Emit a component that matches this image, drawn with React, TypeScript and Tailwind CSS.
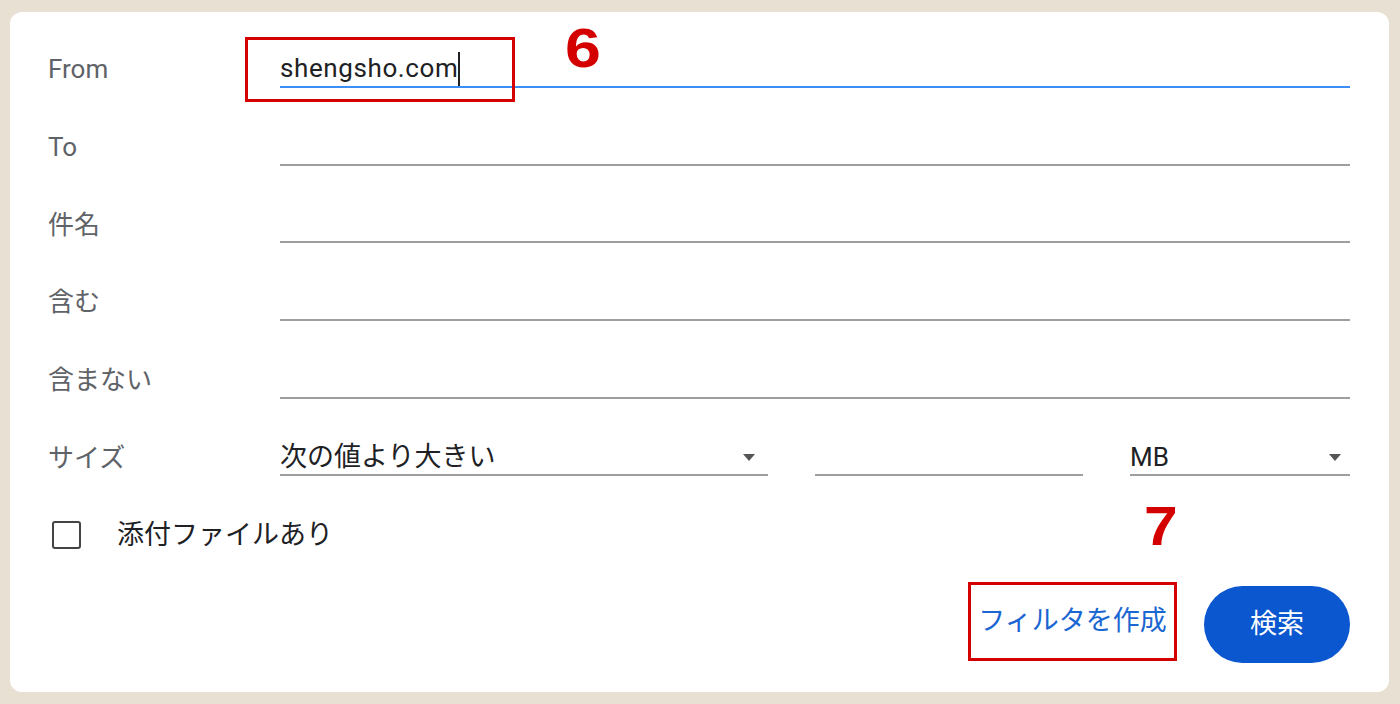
import React from 'react';

const font = { fontFamily: 'Roboto, "Noto Sans CJK JP", sans-serif' };
const mark = { fontFamily: '"Liberation Sans", sans-serif' };

const rows = ['From', 'To', '件名', '含む', '含まない'];

function Arrow() {
  return (
    <svg width="12" height="7" viewBox="0 0 12 7" className="shrink-0">
      <path d="M0 0h12L6 7z" fill="#555" />
    </svg>
  );
}

function Label({ children }: { children: React.ReactNode }) {
  return <div className="w-[232px] shrink-0 text-[26px] text-[#5f6368]">{children}</div>;
}

export default function App() {
  return (
    <div className="h-[704px] w-[1400px] bg-[#e9e0d4] pt-[12px] pl-[10px] pr-[11px] pb-[12px]" style={font}>
      <div className="relative h-full rounded-[12px] bg-white pt-[19px] pl-[38px] pr-[39px]">
        {rows.map((label, i) => (
          <div key={label} className="flex h-[77.7px] items-center">
            <Label>{label}</Label>
            {i === 0 ? (
              <div className="flex h-[36px] flex-1 items-center border-b-2 border-[#3a8ef5] text-[26px] tracking-[0.6px] text-[#202124]">
                shengsho.com
                <span className="inline-block h-[34px] w-[2px] bg-[#202124]" />
              </div>
            ) : (
              <div className="h-[36px] flex-1 border-b-2 border-[#9e9e9e]" />
            )}
          </div>
        ))}

        <div className="flex h-[77.7px] items-center">
          <Label>サイズ</Label>
          <div className="flex h-[36px] w-[488px] items-center justify-between border-b-2 border-[#9e9e9e] pr-[13px] text-[27px] text-[#202124]">
            次の値より大きい
            <Arrow />
          </div>
          <div className="ml-[47px] h-[36px] w-[268px] border-b-2 border-[#9e9e9e]" />
          <div className="ml-[47px] flex h-[36px] flex-1 items-center justify-between border-b-2 border-[#9e9e9e] pr-[9px] text-[26px] text-[#202124]">
            MB
            <Arrow />
          </div>
        </div>

        <div className="flex h-[76px] items-center">
          <div className="ml-[4px] h-[28px] w-[29px] rounded-[3px] border-[2.5px] border-[#444]" />
          <span className="ml-[36px] text-[27px] text-[#202124]">添付ファイルあり</span>
        </div>

        <div className="mt-[9px] flex items-start justify-end">
          <div className="flex h-[79px] w-[209px] items-center justify-center border-[3px] border-[#d40000]">
            <span className="text-[27px] text-[#1a66d2]">フィルタを作成</span>
          </div>
          <button className="ml-[27px] mt-[4px] flex h-[77px] w-[146px] items-center justify-center rounded-full bg-[#0b57d0] text-[27px] text-white">
            検索
          </button>
        </div>

        <div className="absolute left-[235px] top-[25px] h-[65px] w-[270px] border-[3px] border-[#d40000]" />
        <div className="absolute left-[555px] top-[8px] origin-left scale-x-[1.15] text-[56px] font-bold leading-none text-[#d40000]" style={mark}>
          6
        </div>
        <div className="absolute left-[1134px] top-[486px] origin-left scale-x-[1.08] text-[56px] font-bold leading-none text-[#d40000]" style={mark}>
          7
        </div>
      </div>
    </div>
  );
}
